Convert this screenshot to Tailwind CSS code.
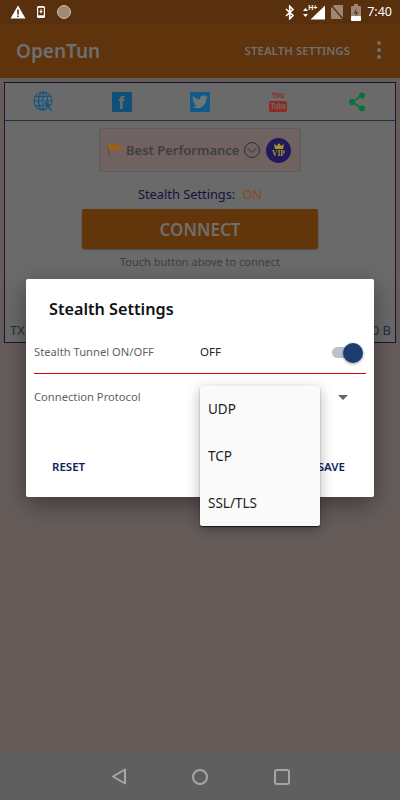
<!DOCTYPE html>
<html><head><meta charset="utf-8"><script src="https://cdn.jsdelivr.net/npm/@tailwindcss/browser@4"></script></head>
<body class="m-0">
<div class="relative w-[400px] h-[800px] overflow-hidden flex flex-col bg-[#665d5b] font-['Noto_Sans','Open_Sans',sans-serif]">
  <!-- status bar -->
  <div class="h-[24px] bg-[#59300e] flex items-center pl-[10px] pr-[8px] text-white shrink-0">
    <svg width="16" height="14" viewBox="0 0 16 14" class="mr-[11px]"><path d="M8 0.5 L15.5 13.5 H0.5 Z" fill="#fff"/><rect x="7.2" y="4.5" width="1.6" height="5" fill="#59300e"/><rect x="7.2" y="10.5" width="1.6" height="1.6" fill="#59300e"/></svg>
    <svg width="8" height="12" viewBox="0 0 8 12" class="mr-[12px]"><rect x="0" y="0" width="8" height="12" rx="1.5" fill="#fff"/><rect x="1.2" y="1.800" width="5.600" height="7.500" fill="#59300e"/><path d="M3.500 3 h1 v2 h1.300 L4 7.500 2.200 5 H3.500Z" fill="#fff"/></svg>
    <div class="w-[14px] h-[14px] rounded-full bg-[#a08a76] border border-[#c8bcae]"></div>
    <div class="flex-1"></div>
    <svg width="10" height="15" viewBox="0 0 10 15" class="mr-[7px]"><path d="M1 4 L8 10.500 4.700 13.800 V1.200 L8 4.500 1 11" fill="none" stroke="#fff" stroke-width="1.600"/></svg>
    <svg width="7" height="11" viewBox="0 0 7 11" class="mr-[1px]"><path d="M3.500 1 L6 4 H1Z M3.500 10 L1 7 H6Z" fill="#fff"/></svg>
    <div class="relative w-[15px] h-[15px] mr-[5px]">
      <svg width="15" height="15" viewBox="0 0 15 15" class="absolute left-0 top-0"><path d="M15 0.500 V14.500 H0.500 Z" fill="#fff"/></svg>
      <span class="absolute left-[-2px] top-[-1px] text-[7px] leading-[8px] font-bold font-['Liberation_Sans',sans-serif]">H+</span>
    </div>
    <svg width="14" height="16" viewBox="0 0 14 16" class="mr-[7px]"><path d="M4 1 H13 V15 H1 V4 Z" fill="#9d8672"/><path d="M1 1 L13 15" stroke="#59300e" stroke-width="1.200"/></svg>
    <svg width="10" height="17" viewBox="0 0 10 17" class="mr-[6px]"><rect x="3" y="0" width="4" height="2" fill="#9d8672"/><rect x="0" y="2" width="10" height="15" rx="1" fill="#9d8672"/><rect x="0" y="12" width="10" height="5" rx="1" fill="#fff"/><path d="M5.500 4 L3 9.500 H5 L4.500 13 L7 8 H5Z" fill="#59300e"/></svg>
    <span class="text-[12.500px] leading-none text-white">7:40</span>
  </div>
  <!-- app bar -->
  <div class="h-[54px] bg-[#5f330c] flex items-center pl-[16px] pr-[19px] shrink-0">
    <span class="text-[19px] font-semibold text-[#6f6f6f] leading-none pt-[1px]">OpenTun</span>
    <div class="flex-1"></div>
    <span class="text-[11.500px] font-semibold text-[#6f6f6f] mr-[27px] leading-none mb-[1px]">STEALTH SETTINGS</span>
    <div class="flex flex-col gap-[3px] mb-[3px]"><i class="block w-[4px] h-[4px] rounded-full bg-[#6f6f6f]"></i><i class="block w-[4px] h-[4px] rounded-full bg-[#6f6f6f]"></i><i class="block w-[4px] h-[4px] rounded-full bg-[#6f6f6f]"></i></div>
  </div>
  <!-- main area -->
  <div class="h-[675px] bg-[#665d5b] shrink-0 flex flex-col">
    <div class="mx-[4px] mt-[4px] h-[261px] border border-[#15163a] bg-[#6a6a6a] flex flex-col">
      <div class="h-[38px] border-b border-[#2b2c46] flex items-center pl-[28px] shrink-0">
        <svg width="21" height="21" viewBox="0 0 21 21" fill="none" stroke="#10557f" stroke-width="1.100" class="mr-[58px]"><circle cx="10" cy="10" r="9"/><ellipse cx="10" cy="10" rx="4.500" ry="9"/><path d="M10 1 V19 M1 10 H19 M2.500 5.500 H17.500 M2.500 14.500 H17.500"/><path d="M10.500 9.500 L19.500 13.500 L16 15 L19.500 19 L18 20.500 L14.500 16.500 L13.500 19.500 Z" fill="#10557f" stroke="#6a6a6a" stroke-width=".8"/></svg>
        <div class="w-[20px] h-[20px] rounded-[1px] bg-[#0f5078] relative overflow-hidden mr-[58px]"><span class="absolute left-[6px] top-[1px] text-[19px] leading-[19px] font-bold text-[#6a6a6a] font-['Liberation_Sans',sans-serif]">f</span></div>
        <div class="w-[20px] h-[20px] rounded-[1px] bg-[#0f5b89] flex items-center justify-center mr-[59px]"><svg width="16" height="14" viewBox="0 0 24 20"><path d="M24 2.400a9.800 9.800 0 0 1-2.800.8 4.900 4.900 0 0 0 2.200-2.700 9.800 9.800 0 0 1-3.100 1.200A4.900 4.900 0 0 0 11.900 6.100 14 14 0 0 1 1.700 1 4.900 4.900 0 0 0 3.200 7.500 4.900 4.900 0 0 1 1 6.900v.1a4.900 4.900 0 0 0 3.900 4.800 4.900 4.900 0 0 1-2.200.1 4.900 4.900 0 0 0 4.600 3.400A9.900 9.900 0 0 1 0 17.300 14 14 0 0 0 7.500 19.500c9 0 14-7.500 14-14v-.6A10 10 0 0 0 24 2.400z" fill="#6f7578"/></svg></div>
        <div class="flex flex-col items-center w-[18px] mr-[61px]">
          <span class="text-[9px] leading-[9px] font-bold text-[#8e2a22] font-['Liberation_Sans',sans-serif] scale-x-75">You</span>
          <div class="w-[18px] h-[11px] bg-[#8e2a22] rounded-[2px] flex items-center justify-center mt-[1px]"><span class="text-[9px] leading-[9px] font-bold text-[#6a6a6a] font-['Liberation_Sans',sans-serif] scale-x-75">Tube</span></div>
        </div>
        <svg width="18" height="20" viewBox="0 0 18 20"><path d="M14 3.500 L4 10 L14 16.500" fill="none" stroke="#0c7038" stroke-width="1.800"/><circle cx="14" cy="3.500" r="3" fill="#0c7038"/><circle cx="4" cy="10" r="3" fill="#0c7038"/><circle cx="14" cy="16.500" r="3" fill="#0c7038"/></svg>
      </div>
      <div class="flex flex-col items-center">
        <div class="mt-[7px] w-[202px] h-[44px] rounded-[2px] bg-[#6f6260] border border-[#5d5d5d] flex items-center pl-[7px] shrink-0">
          <svg width="16" height="17" viewBox="0 0 18 17"><path d="M3 16 L1 3" stroke="#4a4a4a" stroke-width="1"/><path d="M1 3 C5 0 8 4 17 2 L15 8 C10 10 7 6 2.500 8.500Z" fill="#a0600f"/></svg>
          <span class="ml-[3px] text-[13px] font-semibold text-[#3f3f3f] leading-none pt-[1px] w-[114px] whitespace-nowrap">Best Performance</span>
          <svg width="16" height="16" viewBox="0 0 16 16" fill="none" stroke="#333" stroke-width="1" class="ml-[4px]"><circle cx="8" cy="8" r="7.500"/><path d="M3.500 6 L8 10.500 12.500 6"/></svg>
          <div class="ml-[6px] w-[25px] h-[25px] rounded-full bg-[#22195a] flex flex-col items-center justify-center">
            <svg width="10" height="6" viewBox="0 0 13 8" class="mb-[1px]"><path d="M0 1 L3.500 4 6.500 0 9.500 4 13 1 12 8 H1Z" fill="#a8952a"/></svg>
            <span class="text-[7.500px] leading-[8px] font-bold text-[#a8952a] font-['Liberation_Serif',serif]">VIP</span>
          </div>
        </div>
        <div class="mt-[13px] text-[12.800px] leading-[18px] text-[#10133a] flex"><span>Stealth Settings:</span><span class="ml-[7px] text-[#8a4a10]">ON</span></div>
        <div class="mt-[6px] w-[236px] h-[40px] rounded-[2px] bg-[#62350b] flex items-center justify-center text-[17px] font-semibold text-[#6f6f6f] pt-[1px] shadow-[0_1px_2px_rgba(0,0,0,.25)]">CONNECT</div>
        <div class="mt-[5px] text-[11px] leading-[16px] text-[#3f3f3f]">Touch button above to connect</div>
      </div>
      <div class="mt-[52px] flex justify-between pl-[5px] pr-[4px] text-[13px] leading-[16px] text-[#2a2c40]"><span>TX</span><span>0 B</span></div>
    </div>
  </div>
  <!-- nav bar -->
  <div class="h-[47px] bg-[#5f5f5f] flex items-center shrink-0 pl-[111px] gap-[65px]">
    <svg width="16" height="17" viewBox="0 0 16 17" fill="none" stroke="#a6a6a6" stroke-width="2" stroke-linejoin="round"><path d="M14 1.500 V15.500 L2 8.500 Z"/></svg>
    <svg width="16" height="16" viewBox="0 0 16 16" fill="none" stroke="#a6a6a6" stroke-width="2"><circle cx="8" cy="8" r="7"/></svg>
    <svg width="16" height="16" viewBox="0 0 16 16" fill="none" stroke="#a6a6a6" stroke-width="2" class="ml-[1px]"><rect x="1" y="1" width="14" height="14" rx="2"/></svg>
  </div>
  <!-- dialog -->
  <div class="absolute left-[26px] top-[279px] w-[348px] h-[218px] bg-white rounded-[2px] shadow-[0_8px_24px_rgba(0,0,0,.4)]">
    <div class="pl-[23px] pt-[19px] text-[16.200px] leading-[22px] font-semibold text-[#111]">Stealth Settings</div>
    <div class="mx-[8px] mt-[13px] h-[41px] border-b border-[#d40000] flex items-center relative">
      <span class="text-[11.200px] text-[#5f5f5f] leading-none w-[166px] mb-[3px]">Stealth Tunnel ON/OFF</span>
      <span class="text-[11.500px] text-[#222] leading-none mb-[3px]">OFF</span>
      <div class="absolute right-[6px] top-[14px] w-[28px] h-[11px] rounded-full bg-[#bac2d2]"></div>
      <div class="absolute right-[3px] top-[10px] w-[20px] h-[20px] rounded-full bg-[#1d3c70] shadow-[0_1px_3px_rgba(0,0,0,.4)]"></div>
    </div>
    <div class="mx-[8px] mt-[15px] flex items-center h-[16px] relative">
      <span class="text-[11.200px] text-[#5f5f5f] leading-none">Connection Protocol</span>
      <svg width="10" height="5" viewBox="0 0 10 5" class="absolute right-[18px] top-[6px]"><path d="M0 0 H10 L5 5Z" fill="#666"/></svg>
    </div>
    <div class="absolute left-[26px] top-[180px] text-[11.500px] font-semibold leading-[16px] text-[#0f1f5c]">RESET</div>
    <div class="absolute right-[29px] top-[180px] text-[11.500px] font-semibold leading-[16px] text-[#0f1f5c]">SAVE</div>
  </div>
  <!-- dropdown -->
  <div class="absolute left-[200px] top-[386px] w-[120px] h-[140px] bg-[#fafafa] rounded-[2px] shadow-[0_1px_1px_rgba(0,0,0,.7),0_4px_14px_rgba(0,0,0,.3)] flex flex-col text-[13.500px] text-[#222]">
    <div class="h-[47px] flex items-center pl-[8px]">UDP</div>
    <div class="h-[47px] flex items-center pl-[8px]">TCP</div>
    <div class="h-[46px] flex items-center pl-[8px]">SSL/TLS</div>
  </div>
</div>
</body></html>
